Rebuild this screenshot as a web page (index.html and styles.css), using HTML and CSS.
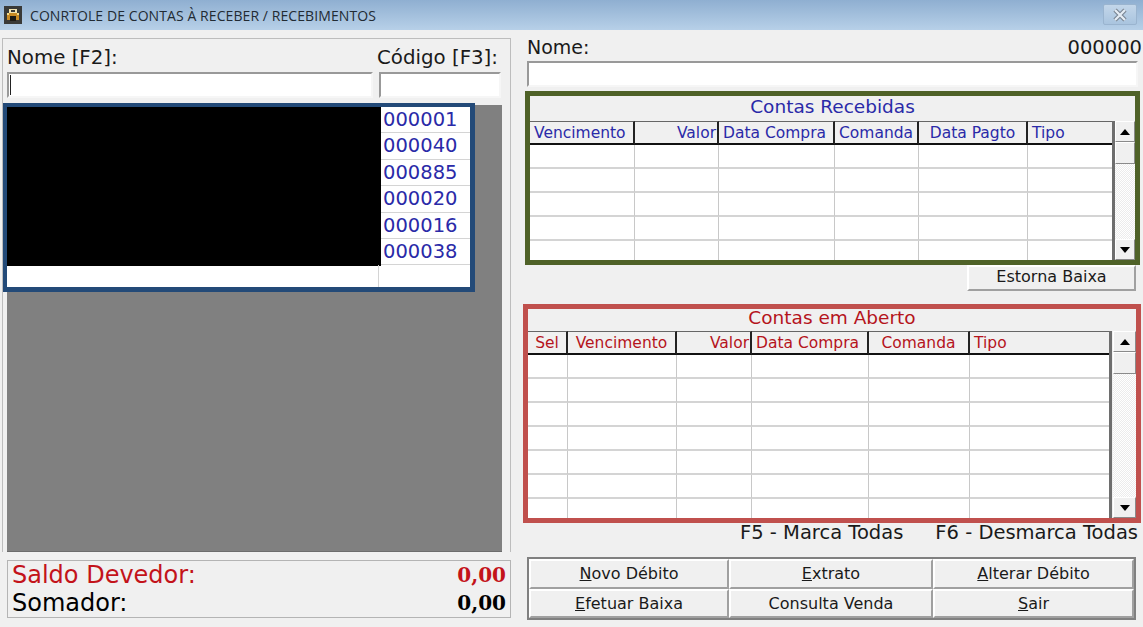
FILE: index.html
```html
<!DOCTYPE html>
<html lang="pt">
<head>
<meta charset="utf-8">
<title>Conrtole de contas</title>
<link rel="stylesheet" href="styles.css">
</head>
<body>
<header class="titlebar">
  <svg class="app-icon" width="18" height="18" viewBox="0 0 18 18"><rect width="18" height="18" fill="#3a3a38"/><path d="M5 3h8v4H5z" fill="#f2e3b0"/><path d="M3 7h12v7H3z" fill="#c98a24"/><path d="M6 10h6v5H6z" fill="#1d1a14"/><path d="M7 4h4v2H7z" fill="#3a3a38"/><path d="M3 7h2v2H3zM13 7h2v2h-2z" fill="#f2d98a"/></svg>
  <span class="title">CONRTOLE DE CONTAS À RECEBER / RECEBIMENTOS</span>
  <button class="close" aria-label="Fechar"><svg width="16" height="14" viewBox="0 0 16 14"><path d="M3 2l10 10M13 2L3 12" fill="none" stroke="#7b8693" stroke-width="4.500"/><path d="M3 2l10 10M13 2L3 12" fill="none" stroke="#e6edf5" stroke-width="2.200"/></svg></button>
</header>
<main class="main">
  <section class="left">
    <div class="panel">
      <div class="fields">
        <div class="field name-field"><label>Nome [F2]:</label><div class="input"><span class="caret"></span></div></div>
        <div class="field code-field"><label>Código [F3]:</label><div class="input"></div></div>
      </div>
      <div class="gray">
        <div class="client-box">
          <div class="client-row"><span class="cname"></span><span class="ccode">000001</span></div>
          <div class="client-row"><span class="cname"></span><span class="ccode">000040</span></div>
          <div class="client-row"><span class="cname"></span><span class="ccode">000885</span></div>
          <div class="client-row"><span class="cname"></span><span class="ccode">000020</span></div>
          <div class="client-row"><span class="cname"></span><span class="ccode">000016</span></div>
          <div class="client-row"><span class="cname"></span><span class="ccode">000038</span></div>
          <div class="client-row empty"><span class="cname"></span><span class="ccode"></span></div>
        </div>
      </div>
    </div>
    <div class="summary">
      <div class="sum-row red"><span class="sum-label">Saldo Devedor:</span><b class="sum-value">0,00</b></div>
      <div class="sum-row"><span class="sum-label">Somador:</span><b class="sum-value">0,00</b></div>
    </div>
  </section>
  <section class="right">
    <div class="name-head"><span>Nome:</span><span>000000</span></div>
    <div class="input wide"></div>
    <div class="box green">
      <h2 class="box-title">Contas Recebidas</h2>
      <div class="grid-wrap">
        <div class="grid">
          <div class="row head">
            <span>Vencimento</span><span class="r">Valor</span><span>Data Compra</span><span>Comanda</span><span class="c">Data Pagto</span><span>Tipo</span>
          </div>
          <div class="row"><i></i><i></i><i></i><i></i><i></i><i></i></div>
          <div class="row"><i></i><i></i><i></i><i></i><i></i><i></i></div>
          <div class="row"><i></i><i></i><i></i><i></i><i></i><i></i></div>
          <div class="row"><i></i><i></i><i></i><i></i><i></i><i></i></div>
          <div class="row"><i></i><i></i><i></i><i></i><i></i><i></i></div>
        </div>
        <div class="scroll"><div class="sbtn"><span class="up"></span></div><div class="thumb"></div><div class="track"></div><div class="sbtn"><span class="down"></span></div></div>
      </div>
    </div>
    <div class="estorna-line"><button class="btn estorna">Estorna Baixa</button></div>
    <div class="box redbox">
      <h2 class="box-title">Contas em Aberto</h2>
      <div class="grid-wrap">
        <div class="grid">
          <div class="row head">
            <span class="c">Sel</span><span class="c">Vencimento</span><span class="r">Valor</span><span>Data Compra</span><span class="c">Comanda</span><span>Tipo</span>
          </div>
          <div class="row"><i></i><i></i><i></i><i></i><i></i><i></i></div>
          <div class="row"><i></i><i></i><i></i><i></i><i></i><i></i></div>
          <div class="row"><i></i><i></i><i></i><i></i><i></i><i></i></div>
          <div class="row"><i></i><i></i><i></i><i></i><i></i><i></i></div>
          <div class="row"><i></i><i></i><i></i><i></i><i></i><i></i></div>
          <div class="row"><i></i><i></i><i></i><i></i><i></i><i></i></div>
          <div class="row"><i></i><i></i><i></i><i></i><i></i><i></i></div>
        </div>
        <div class="scroll"><div class="sbtn"><span class="up"></span></div><div class="thumb"></div><div class="track"></div><div class="sbtn"><span class="down"></span></div></div>
      </div>
    </div>
    <div class="hints"><span>F5 - Marca Todas</span><span>F6 - Desmarca Todas</span></div>
    <div class="actions">
      <button class="btn"><u>N</u>ovo Débito</button>
      <button class="btn"><u>E</u>xtrato</button>
      <button class="btn"><u>A</u>lterar Débito</button>
      <button class="btn"><u>E</u>fetuar Baixa</button>
      <button class="btn">Consulta Venda</button>
      <button class="btn"><u>S</u>air</button>
    </div>
  </section>
</main>
</body>
</html>
```
FILE: styles.css
```css
* { box-sizing: border-box; }
html, body { margin: 0; padding: 0; }
body {
  width: 1143px;
  height: 627px;
  overflow: hidden;
  background: #f0f0f0;
  font-family: "DejaVu Sans", Verdana, sans-serif;
  color: #1a1a1a;
  display: flex;
  flex-direction: column;
}
.titlebar {
  height: 30px;
  flex: none;
  display: flex;
  align-items: center;
  padding: 0 6px 0 4px;
  background: linear-gradient(#8fafd1, #b7d0e8);
}
.app-icon { flex: none; margin-right: 8px; }
.title {
  font: 14px "Open Sans", sans-serif;
  letter-spacing: 0.08px;
  color: #222b33;
  flex: 1;
}
.close {
  width: 34px;
  height: 21px;
  margin-top: -1px;
  padding: 0;
  border: 1px solid #9ab4cf;
  border-radius: 2px;
  background: linear-gradient(#c3d6e9, #a9c4df);
  display: flex;
  align-items: center;
  justify-content: center;
}
.main {
  flex: 1;
  display: grid;
  grid-template-columns: 523px 620px;
  min-height: 0;
}
.left { padding: 8px 0 0 2px; }
.panel {
  width: 509px;
  height: 514px;
  border: 1px solid #bdbdbd;
  border-bottom-width: 0;
  padding: 0 0 0 4px;
  display: flex;
  flex-direction: column;
}
.fields { display: flex; gap: 6px; height: 66px; }
.field label {
  display: block;
  font-size: 19.800px;
  line-height: 20px;
  margin-top: 9px;
  height: 24px;
  white-space: nowrap;
}
.name-field { width: 366px; }
.code-field { width: 122px; }
.code-field label { margin-left: -2px; }
.input {
  height: 26px;
  background: #fff;
  border: 2px solid #f6f6f6;
  border-top-color: #999;
  border-left-color: #999;
  display: flex;
  align-items: center;
}
.caret { width: 1px; height: 20px; margin-left: 1px; background: #222; }
.gray {
  flex: 1;
  width: 495px;
  background: #808080;
  border-bottom: 1px solid #6c6c6c;
}
.client-box {
  width: 472px;
  height: 189px;
  margin: -2px 0 0 -4px;
  border: 5px solid #234a78;
  border-width: 4px 5px 5px 4px;
  background: #fff;
  overflow: hidden;
}
.client-row {
  display: flex;
  height: 26.400px;
  border-bottom: 1px solid #d4d4d4;
}
.cname { width: 374px; background: #000; margin-bottom: -2px; }
.empty { border-bottom: 0; height: 22px; }
.empty .cname { background: transparent; border-right: 1px solid #d4d4d4; width: 372px; margin: 0; }
.ccode {
  color: #2a2aa8;
  font-size: 19.500px;
  line-height: 25px;
  padding-left: 2px;
  flex: 1;
}
.summary {
  width: 504px;
  height: 58px;
  margin: 8px 0 0 5px;
  border: 1px solid #b4b4b4;
  padding: 0 4px 0 4px;
}
.sum-row {
  display: flex;
  justify-content: space-between;
  align-items: center;
  height: 28px;
  color: #000;
}
.sum-label { font-size: 24px; line-height: 28px; }
.sum-value { font: bold 20px "DejaVu Serif", serif; }
.red { color: #c3131a; }
.right { padding: 5px 0 0 4px; }
.name-head {
  display: flex;
  justify-content: space-between;
  font-size: 19.500px;
  line-height: 25px;
  height: 26px;
  margin-right: 1px;
}
.name-head span:first-child { font-size: 19px; }
.wide { width: 611px; }
.box { border: 5px solid; background: #f0f0f0; }
.green { border-color: #4f6228; width: 615px; height: 174px; margin: 4px 0 0 -2px; }
.redbox { border-color: #c0504d; width: 618px; height: 219px; margin: 13px 0 0 -4px; }
.box-title {
  margin: 0;
  font-weight: normal;
  font-size: 18.500px;
  height: 25px;
  text-align: center;
  white-space: nowrap;
}
.green .box-title, .green .head span { color: #2a2aa8; }
.redbox .box-title, .redbox .head span { color: #b5141c; }
.redbox .box-title { height: 22px; line-height: 17px; }
.green .box-title { line-height: 22px; }
.grid-wrap { display: flex; height: calc(100% - 25px); }
.redbox .grid-wrap { height: calc(100% - 22px); }
.grid { flex: 1; min-width: 0; overflow: hidden; border-right: 3px solid #6e6e6e; }
.row { display: grid; height: 24px; background: #fff; }
.green .row { grid-template-columns: 105px 84px 116px 84px 109px 84px; }
.redbox .row { grid-template-columns: 40px 109px 75px 117px 101px 140px; }
.row i { display: block; border-right: 1px solid #c8c8c8; border-bottom: 2px solid #d4d4d4; }
.row i:last-child { border-right: 0; }
.head { background: #f0f0f0; height: 24px; }
.head span {
  display: block;
  font-size: 15.500px;
  line-height: 23px;
  padding: 0 4px;
  border-top: 1px solid #666;
  border-right: 2px solid #222;
  border-bottom: 2px solid #111;
  white-space: nowrap;
  overflow: hidden;
}
.head span:last-child { border-right: 0; }
.head .r { text-align: right; padding-right: 1px; }
.head .c { text-align: center; padding: 0; }
.scroll {
  width: 24px;
  flex: none;
  display: flex;
  flex-direction: column;
  padding-left: 1px;
  background: #f0f0f0;
}
.green .scroll { width: 20px; padding-left: 0; }
.sbtn, .thumb {
  background: #f0f0f0;
  border: 1px solid #fff;
  border-right-color: #8a8a8a;
  border-bottom-color: #8a8a8a;
  flex: none;
}
.sbtn { height: 21px; display: flex; align-items: center; justify-content: center; }
.thumb { height: 22px; }
.track { flex: 1; background: repeating-conic-gradient(#fff 0 25%, #ececec 0 50%) 0 0 / 2px 2px; }
.up, .down { width: 0; height: 0; border: 5px solid transparent; }
.up { border-bottom: 6px solid #000; border-top: 0; }
.down { border-top: 6px solid #000; border-bottom: 0; }
.btn {
  font-family: "DejaVu Sans", sans-serif;
  font-size: 16px;
  color: #1a1a1a;
  background: #f0f0f0;
  border: 2px solid;
  border-color: #fff #a0a0a0 #a0a0a0 #fff;
  padding: 0;
}
.estorna-line { display: flex; justify-content: flex-end; margin-right: 7px; }
.estorna { width: 169px; height: 26px; padding-bottom: 3px; }
.hints {
  display: flex;
  justify-content: flex-end;
  gap: 32px;
  font-size: 19.500px;
  line-height: 20px;
  height: 34px;
  margin-right: 5px;
}
.actions {
  display: grid;
  grid-template-columns: 200px 204px 1fr;
  grid-auto-rows: 1fr;
  width: 609px;
  height: 63px;
  border: 2px solid #808080;
  background: #f0f0f0;
}
```
